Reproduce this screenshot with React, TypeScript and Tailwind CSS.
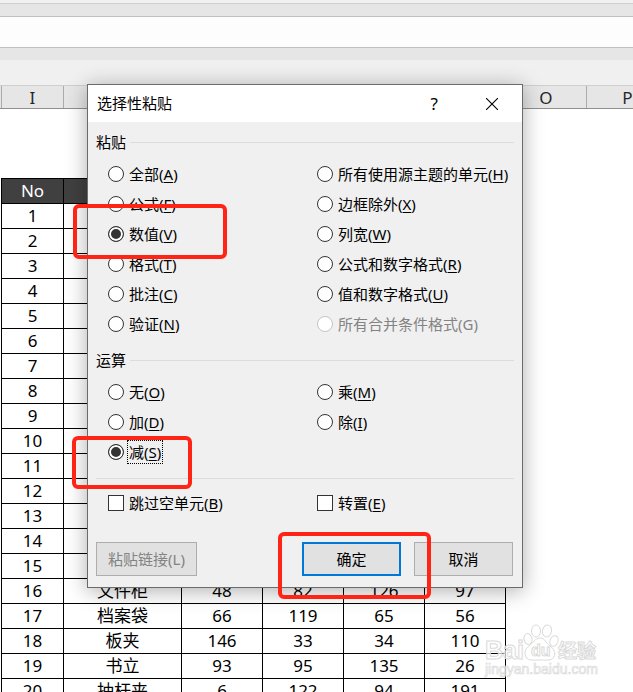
import React from "react";
import clsx from "clsx";

type Option = {
  label: string;
  hotkey: string;
  checked?: boolean;
  disabled?: boolean;
  focused?: boolean;
}

type Row = {
  no: number;
  cells?: string[];
}

const rows: Row[] = [
  ...Array.from({ length: 15 }, (_, i) => ({ no: i + 1 })),
  { no: 16, cells: ["文件柜", "48", "82", "126", "97"] },
  { no: 17, cells: ["档案袋", "66", "119", "65", "56"] },
  { no: 18, cells: ["板夹", "146", "33", "34", "110"] },
  { no: 19, cells: ["书立", "93", "95", "135", "26"] },
  { no: 20, cells: ["抽杆夹", "6", "122", "94", "191"] },
];

// Listed row by row: left column, right column
const pasteOptions: Option[] = [
  { label: "全部", hotkey: "A" },
  { label: "所有使用源主题的单元", hotkey: "H" },
  { label: "公式", hotkey: "F" },
  { label: "边框除外", hotkey: "X" },
  { label: "数值", hotkey: "V", checked: true },
  { label: "列宽", hotkey: "W" },
  { label: "格式", hotkey: "T" },
  { label: "公式和数字格式", hotkey: "R" },
  { label: "批注", hotkey: "C" },
  { label: "值和数字格式", hotkey: "U" },
  { label: "验证", hotkey: "N" },
  { label: "所有合并条件格式", hotkey: "G", disabled: true },
];

const operationOptions: Option[] = [
  { label: "无", hotkey: "O" },
  { label: "乘", hotkey: "M" },
  { label: "加", hotkey: "D" },
  { label: "除", hotkey: "I" },
  { label: "减", hotkey: "S", checked: true, focused: true },
];

const extraOptions: Option[] = [
  { label: "跳过空单元", hotkey: "B" },
  { label: "转置", hotkey: "E" },
];

function Choice({ option, type, name }: { option: Option; type: "radio" | "checkbox"; name: string }) {
  return (
    <label
      className={clsx(
        "flex h-[30px] items-center gap-1 whitespace-nowrap",
        option.disabled ? "text-[#838383]" : "text-black"
      )}
    >
      <input
        className={clsx(
          "h-4 w-4 shrink-0 appearance-none border border-[#333333] bg-white disabled:border-[#c4c4c4]",
          type === "radio" && "rounded-full checked:bg-[#333333] checked:shadow-[inset_0_0_0_2px_#ffffff]"
        )}
        defaultChecked={option.checked}
        disabled={option.disabled}
        name={name}
        type={type}
      />
      <span
        className={clsx(
          "px-px leading-[22px]",
          option.focused && "outline-1 outline-dotted outline-black"
        )}
      >
        {option.label}(
        <span className={option.disabled ? "" : "underline decoration-1 underline-offset-2"}>{option.hotkey}</span>
        )
      </span>
    </label>
  )
}

function OptionGroup({ title, name, options }: { title: string; name: string; options: Option[] }) {
  return (
    <div role="radiogroup" aria-label={title}>
      <div className="flex h-5 items-center gap-1">
        <h2>{title}</h2>
        <div className="h-px flex-1 bg-[#dcdcdc]" />
      </div>
      <div className="mt-[7px] grid grid-cols-[209px_1fr] pl-3">
        {options.map((option) => (
          <Choice key={option.hotkey} name={name} option={option} type="radio" />
        ))}
      </div>
    </div>
  )
}

function PasteDialog() {
  return (
    <div
      aria-label="选择性粘贴"
      className="absolute top-[84px] left-[87px] w-[436px] border border-[#6b6b6b] bg-[#f0f0f0] text-[15px] shadow-[0_3px_20px_rgba(0,0,0,0.32)]"
      role="dialog"
    >
      <div className="flex h-[37px] items-center bg-white pr-6 pl-[9px]">
        <h1 className="flex-1">选择性粘贴</h1>
        <button aria-label="帮助" className="mr-12 text-[17px]" type="button">?</button>
        <button aria-label="关闭" type="button">
          <svg className="h-3 w-3" fill="none" stroke="black" strokeWidth="1.1" viewBox="0 0 12 12">
            <path d="M0 0L12 12M12 0L0 12" />
          </svg>
        </button>
      </div>
      <div className="px-2 pt-2.5 pb-[11px]">
        <OptionGroup name="paste" options={pasteOptions} title="粘贴" />
        <div className="mt-[11px]">
          <OptionGroup name="operation" options={operationOptions} title="运算" />
        </div>
        <hr className="mt-[11px] border-[#dcdcdc]" />
        <div className="mt-[9px] grid grid-cols-[209px_1fr] pl-3">
          {extraOptions.map((option) => (
            <Choice key={option.hotkey} name={option.label} option={option} type="checkbox" />
          ))}
        </div>
        <div className="mt-6 flex pr-px">
          <button
            className="mr-auto h-[34px] w-[101px] border border-[#adadad] bg-[#e1e1e1] text-[#838383]"
            disabled
            type="button"
          >
            粘贴链接(L)
          </button>
          <button className="mr-[13px] h-[34px] w-[99px] border-2 border-[#0078d7] bg-[#e1e1e1]" type="button">
            确定
          </button>
          <button className="h-[34px] w-[99px] border border-[#adadad] bg-[#e1e1e1]" type="button">
            取消
          </button>
        </div>
      </div>
    </div>
  )
}

function Watermark() {
  return (
    <svg
      className="absolute top-[620px] left-[482px] h-[62px] w-[120px] font-['Liberation_Sans','Noto_Sans_CJK_SC',sans-serif]"
      fill="#ffffff"
      fillOpacity="0.7"
      stroke="#dadada"
      strokeWidth="1"
      viewBox="0 0 120 62"
    >
      <text fontSize="25" fontWeight="700" x="3" y="39">Bai</text>
      <ellipse cx="46" cy="19" rx="4" ry="5.5" transform="rotate(-12 46 19)" />
      <ellipse cx="54" cy="11" rx="4.5" ry="6" />
      <ellipse cx="65" cy="11" rx="4.5" ry="6" transform="rotate(12 65 11)" />
      <ellipse cx="72" cy="21" rx="4" ry="5.5" transform="rotate(20 72 21)" />
      <path d="M58 18C53 18 51 23 47 26C43 29 42 33 44 37C46 41 51 40 58 40C65 40 69 41 72 37C74 33 72 29 68 26C64 23 63 18 58 18Z" />
      <text fontSize="16" fontWeight="700" x="49" y="36">du</text>
      <text fontSize="19" fontWeight="700" x="76" y="38">经验</text>
      <text fontSize="14" strokeWidth="0.7" x="3" y="54">jingyan.baidu.com</text>
    </svg>
  )
}

export default function App() {
  return (
    <div className="relative h-screen overflow-hidden bg-white font-['Noto_Sans','Noto_Sans_CJK_SC',sans-serif] text-black">
      <div className="h-1 border-b border-[#cfcfcf] bg-[#f1f1f1]" />
      <div className="h-[13px] border-b border-[#bfbfbf] bg-[#e6e6e6]" />
      <div className="h-[31px] border-b border-[#bfbfbf] bg-[#fdfdfd]" />
      <div className="h-3 bg-[#e6e6e6]" />
      <div className="h-[25px] bg-[#f0f0f0]" />

      <div className="flex h-6 border-t border-b border-t-[#cfcfcf] border-b-[#8f8f8f] bg-[#e6e6e6] text-[17px] leading-6 text-[#262626]">
        <div className="w-0.5 shrink-0 border-r border-[#ababab]" />
        <div className="w-[62px] shrink-0 border-r border-[#ababab] text-center">I</div>
        {/* Columns J to N stay behind the dialog */}
        <div className="w-[442px] shrink-0 border-r border-[#ababab]" />
        <div className="w-[81px] shrink-0 border-r border-[#ababab] text-center">O</div>
        <div className="w-[81px] shrink-0 text-center">P</div>
      </div>

      <table className="mt-[69px] ml-px w-[505px] table-fixed border-separate border-spacing-0 border-t border-l border-black text-center text-[17px] leading-6">
        <colgroup>
          <col className="w-[62px]" />
          <col className="w-[118px]" />
          <col className="w-[81px]" />
          <col className="w-[81px]" />
          <col className="w-[81px]" />
          <col className="w-[81px]" />
        </colgroup>
        <thead>
          <tr className="h-[25px] bg-[#404040] text-white">
            <th className="border-r border-b border-black p-0 font-normal">No</th>
            {[0, 1, 2, 3, 4].map((i) => (
              <td className="border-r border-b border-black p-0" key={i} />
            ))}
          </tr>
        </thead>
        <tbody>
          {rows.map((row) => (
            <tr className="h-[25px]" key={row.no}>
              <td className="border-r border-b border-black p-0">{row.no}</td>
              {(row.cells ?? ["", "", "", "", ""]).map((cell, i) => (
                <td className="border-r border-b border-black p-0" key={i}>{cell}</td>
              ))}
            </tr>
          ))}
        </tbody>
      </table>

      <Watermark />
      <PasteDialog />

      {/* Highlights for the three steps */}
      <div className="pointer-events-none absolute top-[204px] left-[73px] h-[55px] w-[154px] rounded-md border-4 border-[#ff2415]" />
      <div className="pointer-events-none absolute top-[436px] left-[72px] h-[53px] w-[120px] rounded-md border-4 border-[#ff2415]" />
      <div className="pointer-events-none absolute top-[532px] left-[278px] h-[67px] w-[153px] rounded-md border-4 border-[#ff2415]" />
    </div>
  )
}
